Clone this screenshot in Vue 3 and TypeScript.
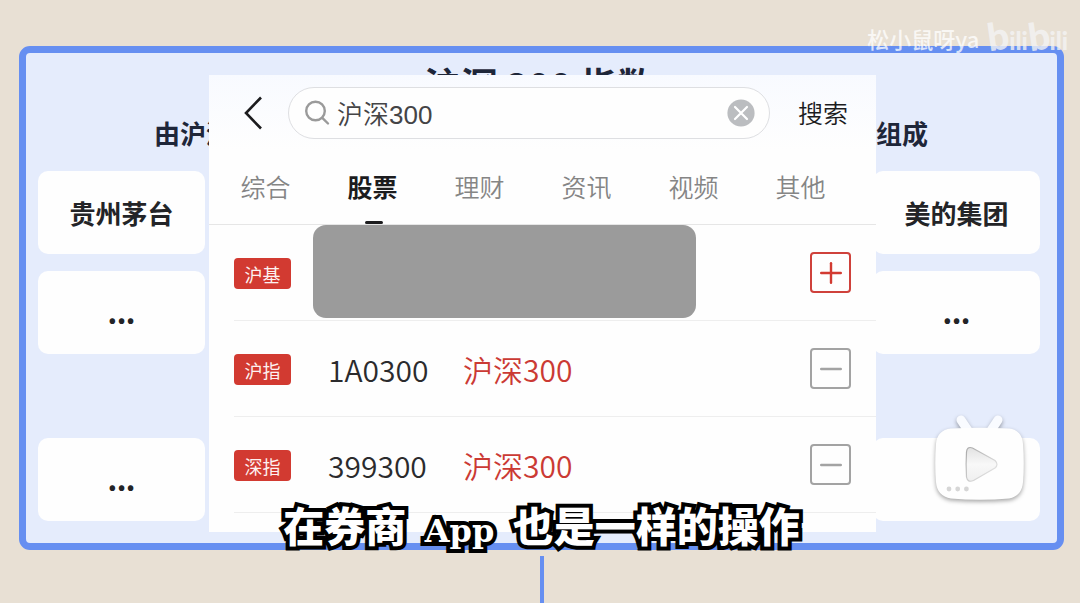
<script setup lang="ts">
import { ref } from 'vue'

interface Quote {
  tag: string
  code?: string
  name?: string
  added: boolean
}

const keyword = ref('沪深300')
const tabs = ['综合', '股票', '理财', '资讯', '视频', '其他']
const active = ref('股票')

const quotes = ref<Quote[]>([
  { tag: '沪基', added: false },
  { tag: '沪指', code: '1A0300', name: '沪深300', added: true },
  { tag: '深指', code: '399300', name: '沪深300', added: true },
])

const holdings: [string, string][] = [
  ['贵州茅台', '美的集团'],
  ['...', '...'],
  ['...', '...'],
]
</script>

<template>
  <main class="stage">
    <section class="frame">
      <h1 class="title">沪深 300 指数</h1>
      <p class="lead"><span>由沪深</span><span>组成</span></p>
      <div v-for="(pair, i) in holdings" :key="i" class="pair">
        <div v-for="(name, j) in pair" :key="j" :class="['holding', { more: name === '...' }]">{{ name }}</div>
      </div>

      <div class="panel">
        <form class="search" @submit.prevent>
          <button type="button" class="back" aria-label="返回">
            <svg width="20" height="34" viewBox="0 0 20 34" fill="none" stroke="#1c1c1e" stroke-width="2.6">
              <path d="M17 1.5 2 17 17 32.5" />
            </svg>
          </button>
          <div class="field">
            <svg width="26" height="26" viewBox="0 0 26 26" fill="none" stroke="#9a9a9a" stroke-width="2.4" stroke-linecap="round">
              <circle cx="10.5" cy="11" r="9.3" />
              <path d="M17.3 17.8 23 23.5" />
            </svg>
            <input v-model="keyword" type="text" aria-label="搜索关键词" />
            <button type="button" class="clear" aria-label="清除" @click="keyword = ''">
              <svg width="28" height="28" viewBox="0 0 28 28">
                <circle cx="14" cy="14" r="13.6" fill="#bbbdc0" />
                <path d="m8 8 12 12M20 8 8 20" stroke="#fff" stroke-width="2.2" stroke-linecap="round" />
              </svg>
            </button>
          </div>
          <button type="submit" class="go">搜索</button>
        </form>

        <nav class="tabs">
          <button
            v-for="tab in tabs"
            :key="tab"
            type="button"
            :class="['tab', { on: tab === active }]"
            @click="active = tab"
          >
            {{ tab }}
          </button>
        </nav>

        <ul class="quotes">
          <li v-for="(q, i) in quotes" :key="i" class="quote">
            <span class="tag">{{ q.tag }}</span>
            <template v-if="q.code">
              <span class="code">{{ q.code }}</span>
              <span class="name">{{ q.name }}</span>
            </template>
            <span v-else class="mask"></span>
            <button
              type="button"
              :class="['toggle', { add: !q.added }]"
              :aria-label="q.added ? '移除自选' : '加入自选'"
              @click="q.added = !q.added"
            >
              <svg width="22" height="22" viewBox="0 0 22 22" stroke="currentColor" stroke-width="2.4" stroke-linecap="round">
                <path d="M1.2 11h19.6" />
                <path v-if="!q.added" d="M11 1.2v19.6" />
              </svg>
            </button>
          </li>
        </ul>
      </div>

      <p class="caption">在券商 <span>App</span> 也是一样的操作</p>
    </section>
    <div class="stem"></div>

    <div class="mark">
      <span>松小鼠呀ya</span>
      <span class="brand"><b>b</b>ili<b>b</b>ili</span>
    </div>

    <button type="button" class="play" aria-label="播放">
      <svg width="104" height="104" viewBox="0 0 104 104">
        <defs>
          <linearGradient id="tri" x1="0" y1="0" x2="0" y2="1">
            <stop offset="0" stop-color="#e2e2e2" />
            <stop offset="0.5" stop-color="#f8f8f8" />
            <stop offset="1" stop-color="#efefef" />
          </linearGradient>
          <linearGradient id="edge" x1="0" y1="0" x2="1" y2="1">
            <stop offset="0" stop-color="#a8a8a8" />
            <stop offset="0.55" stop-color="#cfcfcf" />
            <stop offset="1" stop-color="#eeeeee" />
          </linearGradient>
        </defs>
        <g class="tv">
          <path d="m33 14 8 12M70 14l-8 12" stroke="#f9fbff" stroke-width="9" stroke-linecap="round" />
          <path
            d="M23 22.5Q52 21 81 22.5Q94 24 95 38Q96.5 58 95 76Q94 90 81 92.5Q52 95 23 92.5Q9 90 8 76Q6.5 58 8 38Q9 24 23 22.5Z"
            fill="#fefefe"
          />
        </g>
        <path
          d="M38.5 46Q39 40 44.5 42L67 54.5Q71 58.5 67 62L45.5 74.5Q39.5 77 38.5 71Q37.7 58 38.5 46Z"
          fill="url(#tri)"
          stroke="url(#edge)"
          stroke-width="1.2"
        />
        <g fill="#d6d6d6">
          <circle cx="21" cy="83" r="2.4" />
          <circle cx="29.7" cy="83" r="2.4" />
          <circle cx="38.4" cy="83" r="2.4" />
        </g>
      </svg>
    </button>
  </main>
</template>

<style>
body {
  margin: 0;
}
</style>

<style scoped>
* {
  box-sizing: border-box;
}
.stage {
  position: relative;
  display: flex;
  flex-direction: column;
  min-height: 100vh;
  padding: 46px 16px 0 19px;
  overflow: hidden;
  background: #e8e0d4;
  font-family: "Noto Sans CJK SC", sans-serif;
}
button {
  padding: 0;
  border: 0;
  background: none;
  font: inherit;
  color: inherit;
  cursor: pointer;
}
svg {
  display: block;
}
.frame {
  position: relative;
  padding: 7px 17px 22px 12px;
  border: 7px solid #668ff1;
  border-radius: 11px;
  background: #e5ecfc;
}
.title {
  margin: 0;
  font-size: 37px;
  line-height: 48px;
  font-weight: 700;
  text-align: center;
  color: #1e2639;
}
.lead {
  display: flex;
  justify-content: space-between;
  margin: 9px 0 22px;
  padding: 0 112px 0 116px;
  font-size: 26px;
  line-height: 32px;
  font-weight: 700;
  color: #1e2639;
}
.pair {
  display: flex;
  justify-content: space-between;
}
.pair + .pair {
  margin-top: 17px;
}
.pair + .pair + .pair {
  margin-top: 84px;
}
.holding {
  display: flex;
  align-items: center;
  justify-content: center;
  width: 167px;
  height: 83px;
  border-radius: 10px;
  background: #fefefe;
  font-size: 26px;
  font-weight: 700;
  color: #232427;
}
.holding.more {
  font-weight: 900;
}
.panel {
  position: absolute;
  top: 22px;
  right: 181px;
  bottom: 11px;
  left: 183px;
  overflow: hidden;
  background: linear-gradient(#f8faff, #fefefe 75px);
}
.search {
  display: flex;
  align-items: center;
  height: 76px;
  padding: 0 28px 0 35px;
}
.back {
  width: 20px;
  margin-right: 24px;
}
.field {
  display: flex;
  flex: 1;
  align-items: center;
  min-width: 0;
  height: 52px;
  padding: 0 14px 0 16px;
  border: 1px solid #dedfe2;
  border-radius: 26px;
  background: #fefefe;
}
.field input {
  flex: 1;
  min-width: 0;
  margin-left: 6px;
  padding: 0 0 2px;
  border: 0;
  outline: 0;
  background: none;
  font-family: "Liberation Sans", "Noto Sans CJK SC", sans-serif;
  font-size: 26px;
  font-weight: 350;
  color: #444446;
}
.go {
  margin-left: 28px;
  padding-bottom: 2px;
  font-size: 25px;
  font-weight: 350;
  color: #1c1c1e;
}
.tabs {
  display: flex;
  height: 74px;
  padding: 0 22px 0 3px;
  border-bottom: 1px solid #e6e6e6;
}
.tab {
  position: relative;
  flex: 1;
  padding-bottom: 4px;
  font-size: 25px;
  font-weight: 350;
  color: #858585;
}
.tab.on {
  font-weight: 700;
  color: #1c1c1e;
}
.tab.on::after {
  content: "";
  position: absolute;
  bottom: 0;
  left: 50%;
  width: 18px;
  height: 3px;
  margin-left: -8px;
  border-radius: 2px;
  background: #1c1c1e;
}
.quotes {
  margin: 0;
  padding: 0 0 0 25px;
  list-style: none;
}
.quote {
  display: flex;
  align-items: center;
  height: 96px;
  padding-right: 25px;
  border-bottom: 1px solid #eeeeee;
}
.tag {
  width: 57px;
  height: 31px;
  margin-top: 2px;
  border-radius: 4px;
  background: #d23a31;
  font-size: 18px;
  line-height: 33px;
  text-align: center;
  color: #fdf1f0;
}
.code,
.name {
  font-size: 30px;
  font-weight: 350;
}
.code {
  width: 135px;
  margin-left: 37px;
  color: #2b2b2d;
}
.name {
  color: #cb3a34;
}
.mask {
  flex: 1;
  align-self: flex-start;
  height: 93px;
  margin: 0 114px 0 22px;
  border-radius: 13px;
  background: #9b9b9b;
}
.toggle {
  display: flex;
  align-items: center;
  justify-content: center;
  width: 41px;
  height: 41px;
  margin-left: auto;
  border: 2px solid #a3a3a3;
  border-radius: 4px;
  color: #a3a3a3;
}
.mask + .toggle {
  margin-left: 0;
}
.toggle.add {
  border-color: #cf413b;
  color: #d23a31;
}
.caption {
  position: absolute;
  right: 0;
  bottom: -16px;
  left: 0;
  margin: 0;
  font-size: 41px;
  line-height: 56px;
  font-weight: 900;
  text-align: center;
  white-space: nowrap;
  color: #fff;
  -webkit-text-stroke: 8px #000;
  paint-order: stroke fill;
  stroke-linejoin: round;
}
.caption span {
  margin: 0 9px;
  font-family: "DejaVu Serif", serif;
  font-size: 32px;
  font-weight: 700;
}
.stem {
  flex: 1;
  align-self: center;
  width: 4px;
  min-height: 47px;
  margin-top: 6px;
  background: #668ff1;
}
.mark {
  position: absolute;
  top: 16px;
  right: 12px;
  display: flex;
  align-items: center;
  gap: 8px;
  height: 44px;
  font-size: 22px;
  font-weight: 500;
  color: rgba(255, 255, 255, 0.75);
}
.brand {
  display: flex;
  align-items: baseline;
  font-family: Lato, sans-serif;
  font-size: 24px;
  line-height: 44px;
  font-weight: 900;
  color: rgba(244, 244, 244, 0.8);
}
.brand b {
  font-size: 38px;
  font-weight: 900;
  transform: rotate(-8deg);
}
.play {
  position: absolute;
  right: 48px;
  bottom: 93px;
}
.tv {
  filter: drop-shadow(0 2px 2px rgba(0, 0, 0, 0.35));
}
</style>
